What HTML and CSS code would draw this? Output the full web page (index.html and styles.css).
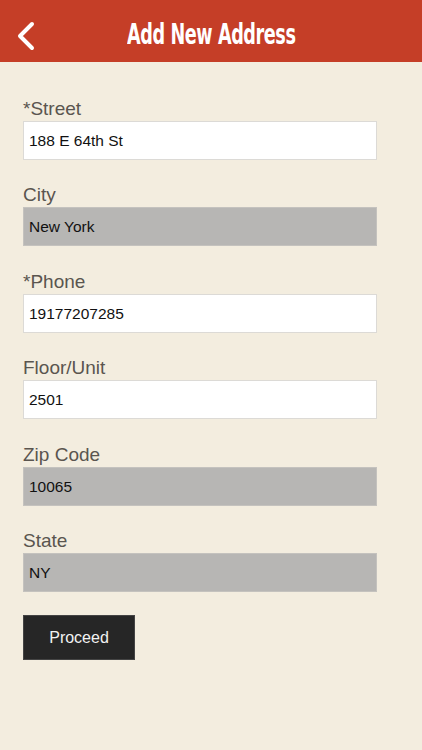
FILE: index.html
```html
<!DOCTYPE html>
<html>
<head>
<meta charset="utf-8">
<link rel="stylesheet" href="styles.css">
</head>
<body>
<header class="topbar">
  <svg class="back" width="20" height="30" viewBox="0 0 20 30"><path d="M16 3 L4 15 L16 27" fill="none" stroke="#fff" stroke-width="4" stroke-linecap="round" stroke-linejoin="round"/></svg>
  <h1 class="title">Add New Address</h1>
</header>
<main class="form">
  <div class="field"><label>*Street</label><div class="box">188 E 64th St</div></div>
  <div class="field"><label>City</label><div class="box gray">New York</div></div>
  <div class="field"><label>*Phone</label><div class="box">19177207285</div></div>
  <div class="field"><label>Floor/Unit</label><div class="box">2501</div></div>
  <div class="field"><label>Zip Code</label><div class="box gray">10065</div></div>
  <div class="field"><label>State</label><div class="box gray">NY</div></div>
  <button class="proceed">Proceed</button>
</main>
</body>
</html>
```
FILE: styles.css
```css
html, body { margin: 0; padding: 0; }
body {
  background: #f3eddf;
  font-family: "Liberation Sans", Arial, sans-serif;
  width: 422px;
  height: 750px;
  overflow: hidden;
}
.topbar {
  height: 62px;
  background: #c53e27;
  display: flex;
  align-items: center;
  justify-content: center;
  position: relative;
}
.back {
  position: absolute;
  left: 16px;
  top: 21px;
}
.title {
  margin: 0;
  color: #fff;
  font-family: "DejaVu Sans Condensed", "DejaVu Sans", sans-serif;
  font-weight: bold;
  font-size: 28px;
  letter-spacing: -0.6px;
  transform: scaleX(0.7);
  padding-top: 6px;
}
.form {
  padding: 35px 45px 0 23px;
  display: flex;
  flex-direction: column;
}
.field {
  display: flex;
  flex-direction: column;
  margin-bottom: 23.4px;
}
.field label {
  font-size: 19px;
  line-height: 24px;
  color: #5a554f;
}
.box {
  height: 37px;
  box-sizing: content-box;
  border: 1px solid #dcdad6;
  background: #fff;
  font-size: 15.5px;
  line-height: 37px;
  padding-left: 5px;
  color: #111;
}
.box.gray {
  background: #b7b6b4;
  border-color: #c4c2be;
}
.proceed {
  margin-top: 0;
  width: 112px;
  height: 45px;
  background: #262626;
  border: 1px solid #444;
  color: #f2f2f2;
  font-family: "Liberation Sans", Arial, sans-serif;
  font-size: 16px;
  padding: 0;
}
```
